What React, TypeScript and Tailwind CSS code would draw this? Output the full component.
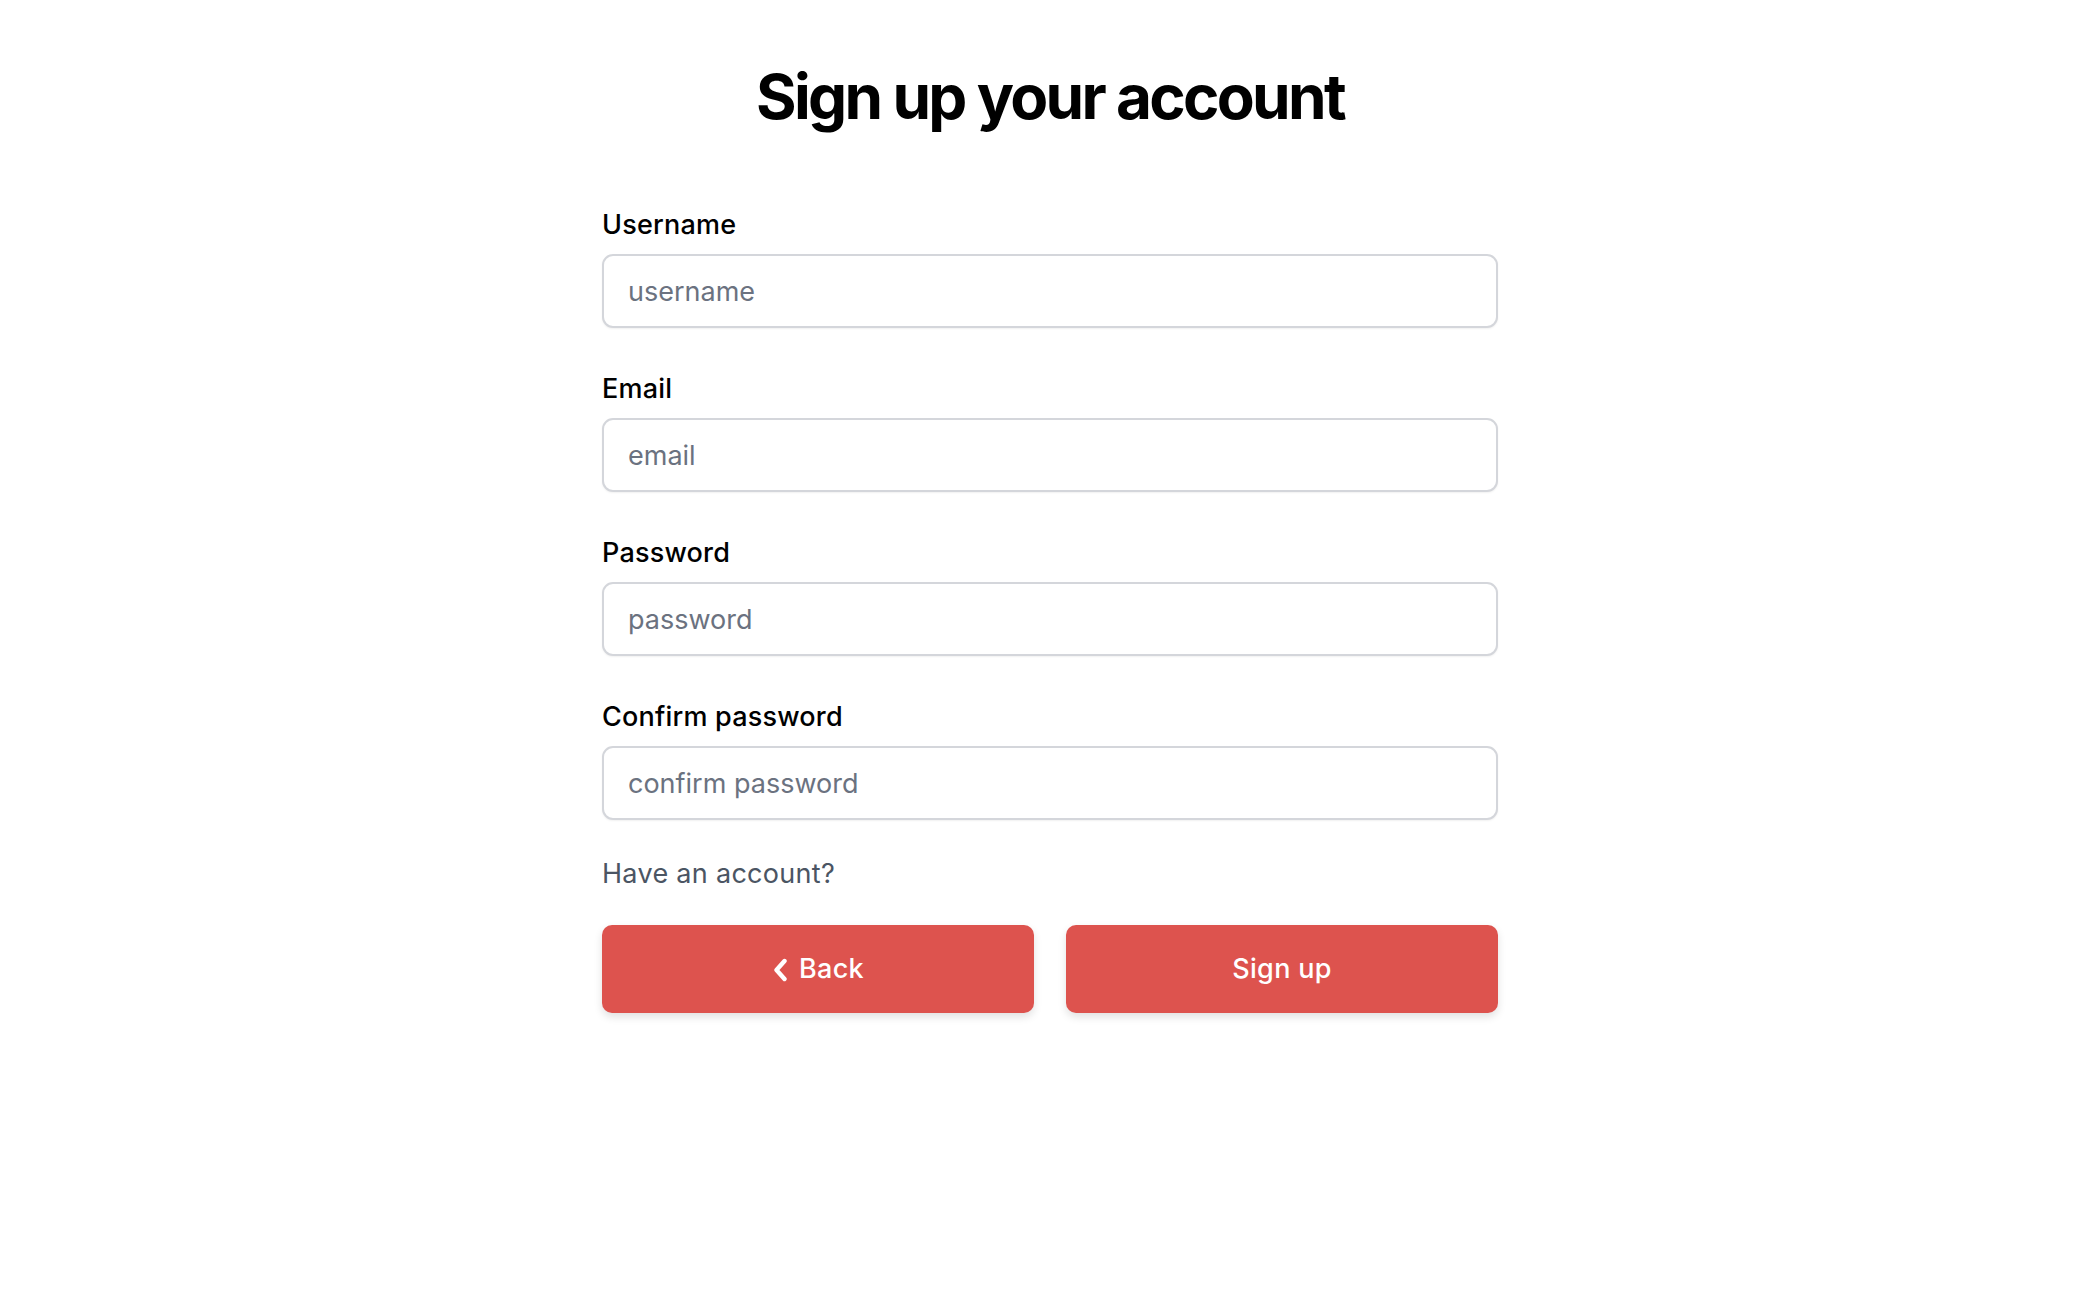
import React from "react";

export default function App() {
  const fields = [
    { label: "Username", placeholder: "username", type: "text" },
    { label: "Email", placeholder: "email", type: "email" },
    { label: "Password", placeholder: "password", type: "password" },
    { label: "Confirm password", placeholder: "confirm password", type: "password" },
  ];
  return (
    <div className="min-h-screen w-full bg-white flex flex-col items-center font-['Inter',sans-serif] text-black">
      <h1 className="mt-[66px] text-[62px] leading-[62px] font-bold tracking-[-2.7px]">Sign up your account</h1>
      <form className="w-[896px] mt-[83px] flex flex-col" onSubmit={(e) => e.preventDefault()}>
        <div className="flex flex-col gap-[47px]">
          {fields.map((f) => (
            <div key={f.label} className="flex flex-col">
              <label className="text-[27px] leading-[27px] font-medium text-black tracking-[0.2px]">{f.label}</label>
              <input
                type={f.type}
                placeholder={f.placeholder}
                className="mt-[16px] h-[74px] w-full rounded-[11px] border-2 border-[#d4d6db] bg-white px-[24px] text-[27px] text-gray-900 placeholder:text-[#6b7280] shadow-[0_1px_2px_rgba(0,0,0,0.06)] outline-none"
              />
            </div>
          ))}
        </div>
        <p className="mt-[40px] text-[27px] leading-[27px] text-[#4b5563] tracking-[0.3px]">Have an account?</p>
        <div className="mt-[38px] grid grid-cols-2 gap-[32px]">
          <button
            type="button"
            className="h-[88px] rounded-[10px] bg-[#dd534e] text-white text-[27px] font-medium tracking-[0.3px] flex items-center justify-center gap-[11px] shadow-[0_4px_8px_rgba(0,0,0,0.12)]"
          >
            <svg width="16" height="24" viewBox="0 0 16 24" fill="none" className="mt-[1px]">
              <path d="M12.5 3 L4.5 12 L12.5 21" stroke="white" strokeWidth="4.4" strokeLinecap="round" strokeLinejoin="round" />
            </svg>
            <span>Back</span>
          </button>
          <button
            type="submit"
            className="h-[88px] rounded-[10px] bg-[#dd534e] text-white text-[27px] font-medium tracking-[0.3px] flex items-center justify-center shadow-[0_4px_8px_rgba(0,0,0,0.12)]"
          >
            Sign up
          </button>
        </div>
      </form>
    </div>
  );
}
